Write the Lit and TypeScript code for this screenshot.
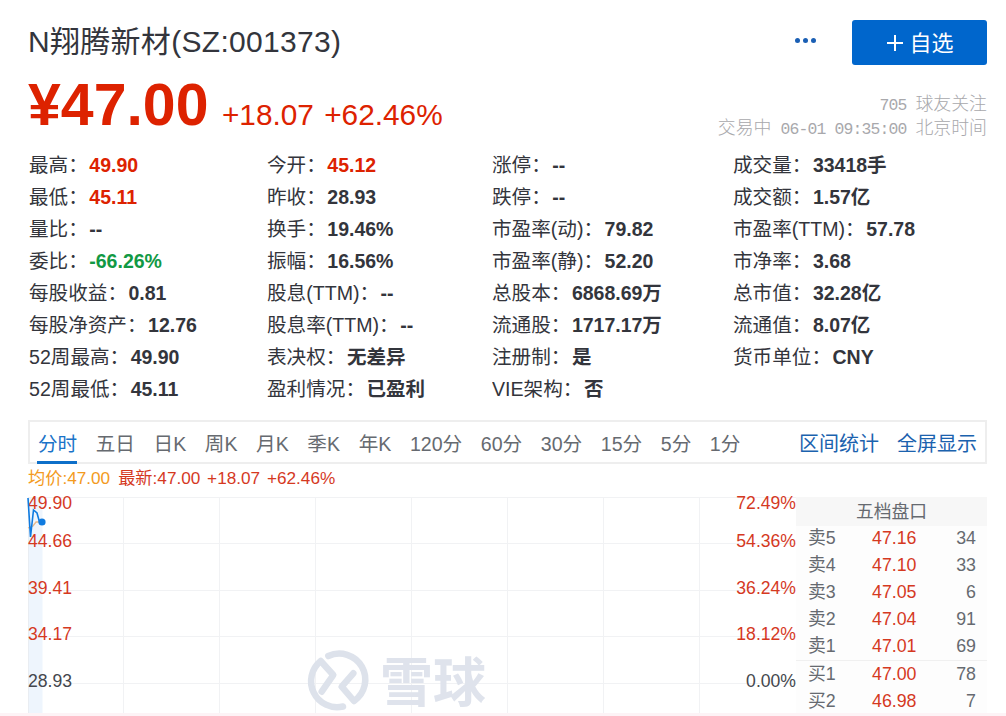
import { LitElement, html, css, svg } from "lit";
import { customElement } from "lit/decorators.js";

type Stat = [string, string, string?];
const stats: Stat[] = [
  ["最高", "49.90", "up"], ["今开", "45.12", "up"], ["涨停", "--"], ["成交量", "33418手"],
  ["最低", "45.11", "up"], ["昨收", "28.93"], ["跌停", "--"], ["成交额", "1.57亿"],
  ["量比", "--"], ["换手", "19.46%"], ["市盈率(动)", "79.82"], ["市盈率(TTM)", "57.78"],
  ["委比", "-66.26%", "down"], ["振幅", "16.56%"], ["市盈率(静)", "52.20"], ["市净率", "3.68"],
  ["每股收益", "0.81"], ["股息(TTM)", "--"], ["总股本", "6868.69万"], ["总市值", "32.28亿"],
  ["每股净资产", "12.76"], ["股息率(TTM)", "--"], ["流通股", "1717.17万"], ["流通值", "8.07亿"],
  ["52周最高", "49.90"], ["表决权", "无差异"], ["注册制", "是"], ["货币单位", "CNY"],
  ["52周最低", "45.11"], ["盈利情况", "已盈利"], ["VIE架构", "否"], ["", ""],
];
const tabs = ["分时", "五日", "日K", "周K", "月K", "季K", "年K", "120分", "60分", "30分", "15分", "5分", "1分"];
const sells = [["卖5", "47.16", "34"], ["卖4", "47.10", "33"], ["卖3", "47.05", "6"], ["卖2", "47.04", "91"], ["卖1", "47.01", "69"]];
const buys = [["买1", "47.00", "78"], ["买2", "46.98", "7"]];
const vx = [95, 191, 287, 383, 479, 575, 671];
const hy = [0.5, 46.5, 93.5, 139.5, 186.5];
const left = [["49.90", 12, "r"], ["44.66", 50, "r"], ["39.41", 97, "r"], ["34.17", 143, "r"], ["28.93", 190, "g"]];
const right = [["72.49%", 12, "r"], ["54.36%", 50, "r"], ["36.24%", 97, "r"], ["18.12%", 143, "r"], ["0.00%", 190, "g"]];

@customElement("app-root")
export class AppRoot extends LitElement {
  static styles = css`
    :host { display: block; width: 1006px; height: 716px; overflow: hidden; background: #fff;
      font-family: "Liberation Sans", "Noto Sans CJK SC", sans-serif; color: #33353c; position: relative; }
    .page { padding: 20px 19px 0 28px; }
    .head { display: flex; align-items: center; height: 45px; }
    h1 { margin: 0 0 2px; flex: 1; font-size: 30px; font-weight: 400; line-height: 43px; letter-spacing: 0.3px; }
    .dots { display: flex; gap: 3px; margin-right: 36px; margin-bottom: 5px; }
    .dots i { width: 5px; height: 5px; border-radius: 50%; background: #1a5fb4; }
    .add { width: 135px; height: 45px; background: #0066cc; color: #fff; border-radius: 3px; box-sizing: border-box; padding-left: 1px;
      display: flex; align-items: center; justify-content: center; gap: 5px; font-size: 22px; }
    .add svg { display: block; }
    .add span { padding-bottom: 3px; }
    .quote { display: flex; justify-content: space-between; height: 84px; }
    .price { display: flex; align-items: baseline; color: #dd2200; height: 76px; }
    .big { font-size: 59px; font-weight: 700; line-height: 80px; margin-right: 13.5px; }
    .chg { font-size: 29.8px; word-spacing: 2px; }
    .meta { text-align: right; color: #a8a8ac; font-size: 17.9px; padding-top: 27px; font-weight: 300; }
    .meta div { height: 24px; line-height: 24px; }
    .meta b { font-family: "Liberation Mono", monospace; font-size: 16.4px; letter-spacing: -0.84px; font-weight: 400; }
    .stats { display: grid; grid-template-columns: 238px 225px 241px 1fr; grid-auto-rows: 32px; padding-left: 1px; font-size: 19.6px; }
    .stat { display: block; height: 32px; line-height: 32px; white-space: nowrap; overflow: hidden; }
    .stat b { margin-left: 1.5px; font-weight: 700; font-size: 19.5px; }
    .up { color: #dd2200; }
    .down { color: #119944; }
    .tabs { margin-top: 15px; height: 44px; box-sizing: border-box; border: 2px solid #eeeeee; display: flex;
      align-items: stretch; padding: 0 8px; font-size: 19.6px; color: #666a70; }
    .tab { display: flex; align-items: center; margin-right: 18.6px; position: relative; }
    .tab.on { color: #1a73c8; }
    .tab.on::after { content: ""; position: absolute; left: -1px; right: 0; bottom: -2px; height: 3px; background: #0d6fc9; }
    .links { margin-left: auto; display: flex; align-items: center; gap: 18px; color: #1b62ae; font-size: 20px; }
    .legend { height: 25px; padding-bottom: 8px; display: flex; align-items: center; gap: 8px; font-size: 17.2px; color: #d5391f; }
    .legend .avg { color: #f39a21; }
    .legend .lat { word-spacing: 2px; }
    .board { display: flex; height: 216px; }
    .chart { display: block; width: 768px; height: 216px; flex: none; overflow: visible; }
    .chart text { font-size: 17.6px; font-family: "Liberation Sans", sans-serif; }
    .chart .r { fill: #d5391f; }
    .chart .g { fill: #44474d; }
    .chart .wm { font-family: "Noto Sans CJK SC", sans-serif; font-size: 53px; font-weight: 700; fill: #dfe3ec; }
    .panel { flex: 1; background: #fdfdfd; font-size: 17.8px; color: #666a70; }
    .ph { height: 25px; padding-bottom: 4px; background: #f7f7f7; display: flex; align-items: center; justify-content: center; }
    .list.top { height: 135px; box-shadow: inset 0 -1px 0 #f0f0f0; }
    .list.bottom { padding-top: 1px; }
    .row { display: grid; grid-template-columns: 64px 1fr auto; height: 27px; line-height: 25px; align-items: baseline; padding: 0 11px 0 12px; overflow: hidden; }
    .row span:nth-child(2) { color: #d5391f; }
    .strip { position: absolute; left: 0; right: 0; bottom: 0; height: 3px; background: #fdf3f6; }
  `;

  chart() {
    return html`<svg class="chart" viewBox="0 0 768 216">
      <rect x="0" y="0" width="14.5" height="216" fill="#eef5fd"></rect>
      ${hy.map((y) => svg`<line x1="0" x2="768" y1=${y} y2=${y} stroke="#f1f2f4"></line>`)}
      ${vx.map((x) => svg`<line x1=${x + 0.5} x2=${x + 0.5} y1="0" y2="216" stroke="#f1f2f4"></line>`)}
      <line x1="0.5" x2="0.5" y1="0" y2="216" stroke="#e9edf2"></line>
      <g fill="none" stroke="#dde2eb" stroke-width="6.5" stroke-linecap="round" stroke-linejoin="round">
        <path d="M293.7 194.7 L305.3 178 L292.7 164 A26 26 0 0 0 315 209.5"></path>
        <path d="M325.3 176.3 L313.7 189.7 L326 204 A26 26 0 0 0 300.3 159"></path>
      </g>
      <text class="wm" x="352" y="205">雪球</text>
      ${left.map(([t, y, c]) => svg`<text class=${c} x="0" y=${y}>${t}</text>`)}
      ${right.map(([t, y, c]) => svg`<text class=${c} x="768" y=${y} text-anchor="end">${t}</text>`)}
      <path d="M0 31 L5 29 L8 25 L12 25" fill="none" stroke="#e8b98a" stroke-width="1.3"></path>
      <path d="M0 1 L2.5 40 L5.5 13 L9 16 L11.5 25 L14 25" fill="none" stroke="#0f7be0" stroke-width="1.6"></path>
      <circle cx="14" cy="25" r="3.6" fill="#0f7be0"></circle>
    </svg>`;
  }

  row(r: string[]) {
    return html`<div class="row"><span>${r[0]}</span><span>${r[1]}</span><span>${r[2]}</span></div>`;
  }

  render() {
    return html`<div class="page">
        <div class="head">
          <h1>N翔腾新材(SZ:001373)</h1>
          <div class="dots"><i></i><i></i><i></i></div>
          <div class="add">
            <svg width="18" height="18" viewBox="0 0 18 18"><path d="M9 1v16M1 9h16" stroke="#fff" stroke-width="2"></path></svg>
            <span>自选</span>
          </div>
        </div>
        <div class="quote">
          <div class="price"><span class="big">¥47.00</span><span class="chg">+18.07 +62.46%</span></div>
          <div class="meta">
            <div><b>705 </b>球友关注</div>
            <div>交易中<b> 06-01 09:35:00 </b>北京时间</div>
          </div>
        </div>
        <div class="stats">
          ${stats.map(([l, v, c]) =>
            l ? html`<div class="stat"><span>${l}：</span><b class=${c ?? ""}>${v}</b></div>` : html`<div></div>`
          )}
        </div>
        <div class="tabs">
          ${tabs.map((t, i) => html`<div class="tab ${i === 0 ? "on" : ""}">${t}</div>`)}
          <div class="links"><span>区间统计</span><span>全屏显示</span></div>
        </div>
        <div class="legend">
          <span class="avg">均价:47.00</span>
          <span class="lat">最新:47.00 +18.07 +62.46%</span>
        </div>
        <div class="board">
          ${this.chart()}
          <div class="panel">
            <div class="ph">五档盘口</div>
            <div class="list top">${sells.map((r) => this.row(r))}</div>
            <div class="list bottom">${buys.map((r) => this.row(r))}</div>
          </div>
        </div>
      </div>
      <div class="strip"></div>`;
  }
}
